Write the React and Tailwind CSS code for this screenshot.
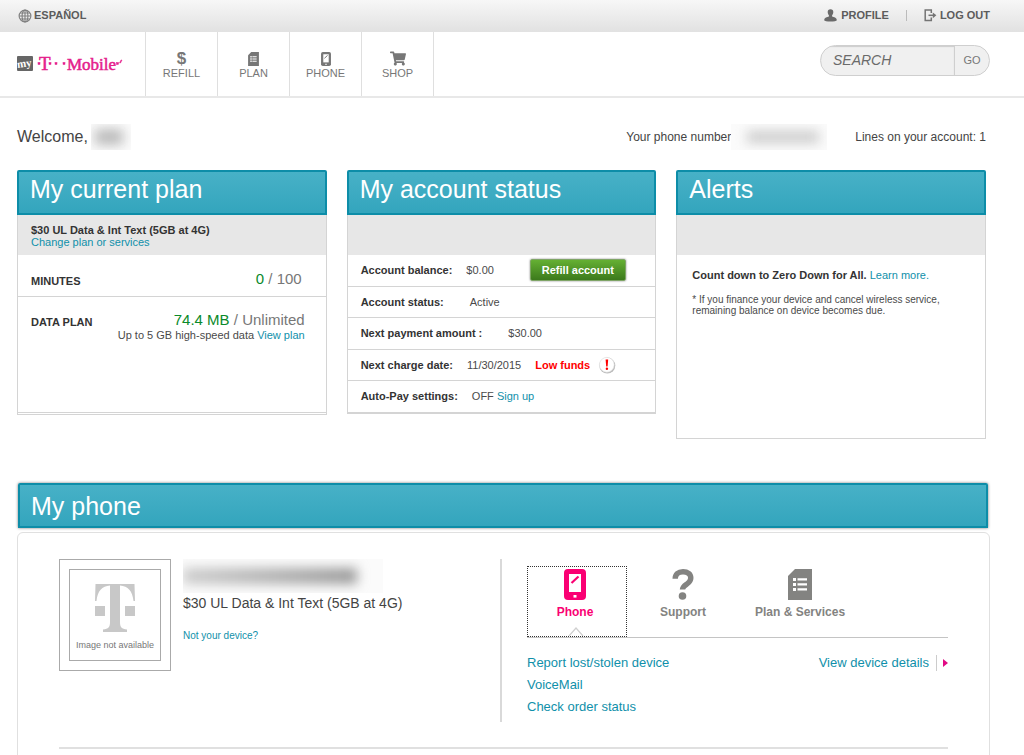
import { FaShoppingCart } from 'react-icons/fa';
import { clsx } from 'clsx';

const GlobeIcon = () => (
  <svg viewBox="0 0 14 14" className="w-[14px] h-[14px]" fill="none" stroke="#808080" strokeWidth="1.1">
    <circle cx="7" cy="7" r="5.9" />
    <ellipse cx="7" cy="7" rx="2.9" ry="5.9" />
    <path d="M7 1v12M1 7h12M2 4h10M2 10h10" />
  </svg>
);

const ProfileIcon = () => (
  <svg viewBox="0 0 13 13" className="w-[13px] h-[13px]" fill="#6a6a6a">
    <path d="M6.5 0.3c1.9 0 2.9 1.3 2.8 3-.1 1.4-.6 2.3-1.2 3v1.1c1.7.6 4.6 1.2 4.6 3.2v.9c0 .5-2.8 1-6.200 1s-6.200-.5-6.200-1v-.9c0-2 2.900-2.600 4.600-3.200V6.300c-.6-.7-1.100-1.600-1.200-3-.1-1.700.9-3 2.800-3z" />
  </svg>
);

const LogoutIcon = () => (
  <svg viewBox="0 0 13 13" className="w-[13px] h-[13px]" fill="none" stroke="#747474" strokeWidth="1.500">
    <path d="M7.300 4V1H1.200v10.500h6.100V8.600" />
    <path d="M4.500 6.300h5" />
    <path d="M8.800 3.400l3.600 2.900-3.600 2.900z" fill="#747474" stroke="none" />
  </svg>
);

const SimIcon = ({ className }) => (
  <svg viewBox="0 0 24 31" className={className}>
    <path d="M7 0h17v31H0V7z" fill="currentColor" />
    <g fill="#fff">
      <path d="M9.500 9.200h9.500v2.400H9.500zM9.500 14.200h9.500v2.400H9.500zM9.500 19.200h9.500v2.400H9.500z" />
      <path d="M5 9h3v3H5zM5 14h3v3H5zM5 19h3v3H5z" />
    </g>
  </svg>
);

const PhoneIcon = ({ className }) => (
  <svg viewBox="0 0 22 31" className={className}>
    <rect width="22" height="31" rx="4" fill="currentColor" />
    <rect x="5" y="5" width="12" height="18" fill="#fff" />
    <rect x="9.500" y="26" width="3" height="2.600" fill="#fff" />
    <path d="M7.500 14L14.500 7.500" stroke="currentColor" strokeWidth="2.200" />
  </svg>
);

const QuestionIcon = ({ className }) => (
  <svg viewBox="0 0 22 31" className={className}>
    <path
      d="M3.200 9.800C3.200 5.200 6.200 2.700 11 2.700s7.800 2.200 7.800 6.200c0 3.200-1.800 4.600-4 6.200-2.800 2-4.300 3-4.300 5.500"
      fill="none"
      stroke="currentColor"
      strokeWidth="5.400"
    />
    <circle cx="10.500" cy="27" r="3.800" fill="currentColor" />
  </svg>
);

const Logo = () => (
  <svg viewBox="0 0 108 20" className="w-[108px] h-5" role="img" aria-label="my T-Mobile">
    <rect x="0" y="2" width="16" height="15" rx="1" fill="#666" />
    <text x="0" y="13" fontSize="11" fontWeight="bold" fontFamily="Liberation Serif, serif" fill="#fff" transform="rotate(-8 8 10)">my</text>
    <g fill="#e5208c" stroke="#e5208c" strokeWidth="0.500" fontFamily="Liberation Serif, serif">
      <text x="22" y="16" fontSize="19">T</text>
      <rect x="21" y="8.500" width="2" height="2" />
      <rect x="32" y="8.500" width="2" height="2" />
      <rect x="38" y="8.500" width="2" height="2" />
      <rect x="46" y="8.500" width="2" height="2" />
      <text x="50" y="16" fontSize="17">Mobile</text>
      <rect x="99.500" y="8.500" width="2" height="2" />
      <path d="M102.500 9l1.500-3h1l-1.500 3z" />
    </g>
  </svg>
);

const MissingDeviceIcon = () => (
  <svg viewBox="0 0 40 48" className="w-10 h-12" fill="#c8c8c8">
    <path d="M0.500 0h39l.5 17h-1.500C37.500 7 33 2 25 1.500V38c0 5 1.500 7 7 7.500V48H8v-2.500c5.500-.5 7-2.500 7-7.500V1.500C7 2 2.500 7 1.500 17H0z" />
    <path d="M0 22h10v10H0zM30 22h10v10H30z" />
  </svg>
);

const WarningIcon = () => (
  <svg viewBox="0 0 18 18" className="w-[18px] h-[18px]">
    <circle cx="9.300" cy="9.600" r="8" fill="#bbb" />
    <circle cx="8.800" cy="8.800" r="7.400" fill="#fff" stroke="#ddd" strokeWidth="0.600" />
    <path d="M7.600 3.500h2.600l-.6 7H8.200z" fill="#f00" />
    <circle cx="8.900" cy="12.700" r="1.200" fill="#f00" />
  </svg>
);

const navItems = [
  { label: 'REFILL', icon: <span className="text-[17px] leading-4 font-bold">$</span> },
  { label: 'PLAN', icon: <SimIcon className="w-[11px] h-[14px]" /> },
  { label: 'PHONE', icon: <PhoneIcon className="w-[10px] h-[14px]" /> },
  { label: 'SHOP', icon: <FaShoppingCart className="w-4 h-[15px]" /> }
];

const tabs = [
  { label: 'Phone', icon: <PhoneIcon className="w-[22px] h-[31px]" />, active: true },
  { label: 'Support', icon: <QuestionIcon className="w-[22px] h-[31px]" />, padding: 'px-[33px]' },
  { label: 'Plan & Services', icon: <SimIcon className="w-6 h-[31px]" />, padding: 'px-4' }
];

const statusRows = [
  {
    label: 'Account balance:',
    gap: 'gap-[14px]',
    value: (
      <>
        $0.00
        <button className="ml-9 h-[22px] w-24 rounded-xs border border-[#7fa566] bg-linear-to-b from-[#65b033] to-[#3c7a1c] text-[11px] leading-4 font-bold text-white shadow-[0_0_2px_#777]">
          Refill account
        </button>
      </>
    )
  },
  { label: 'Account status:', gap: 'gap-[26px]', value: 'Active' },
  { label: 'Next payment amount :', gap: 'gap-[26px]', value: '$30.00' },
  {
    label: 'Next charge date:',
    gap: 'gap-[14px]',
    value: (
      <>
        11/30/2015
        <strong className="ml-[14px] mr-2 text-[#f00]">Low funds</strong>
        <WarningIcon />
      </>
    )
  },
  {
    label: 'Auto-Pay settings:',
    gap: 'gap-[14px]',
    value: (
      <>
        OFF&nbsp;<Link>Sign up</Link>
      </>
    )
  }
];

function Link({ children, className }) {
  return <a href="#" className={clsx('text-[#1090aa]', className)}>{children}</a>;
}

function Redacted({ className, barClassName }) {
  return (
    <span className={clsx('flex items-center overflow-hidden bg-[#fbfbfb]', className)} aria-hidden="true">
      <span className={clsx('block blur-[6px]', barClassName)} />
    </span>
  );
}

function Banner({ children, className }) {
  return (
    <h2 className={clsx('h-[45px] rounded-t-xs border-2 border-[#0d8da8] bg-linear-to-b from-[#47b1c7] to-[#33a5bd] px-[11px] text-[25px] text-white', className)}>
      {children}
    </h2>
  );
}

function Card({ title, strip, children, className }) {
  return (
    <section>
      <Banner className="leading-[34px]">{title}</Banner>
      <div className={clsx('border border-t-0 border-[#d4d4d4]', className)}>
        <div className="h-10 bg-[#e7e7e7] px-[13px] pt-[9px] leading-3">{strip}</div>
        {children}
      </div>
    </section>
  );
}

export default function App() {
  return (
    <div className="h-screen overflow-hidden bg-white font-['Liberation_Sans',Arial,sans-serif] text-[11px] text-[#4a4a4a]">
      <div className="flex h-8 items-center justify-between border-b border-[#e2e2e2] bg-linear-to-b from-[#f7f7f7] to-[#e2e2e2] pl-[18px] pr-[34px] font-bold text-[#5c5c5c]">
        <a href="#" className="flex items-center gap-0.5">
          <GlobeIcon />
          ESPAÑOL
        </a>
        <div className="flex items-center">
          <a href="#" className="flex items-center gap-1">
            <ProfileIcon />
            PROFILE
          </a>
          <span className="mx-[17px] h-[11px] w-px bg-[#bbb]" />
          <a href="#" className="flex items-center gap-[3px]">
            <LogoutIcon />
            LOG OUT
          </a>
        </div>
      </div>

      <header className="flex h-[66px] justify-between border-b-2 border-[#e8e8e8] pr-[34px]">
        <div className="flex">
          <a href="#" className="flex w-[145px] items-center pl-[17px]">
            <Logo />
          </a>
          <nav className="flex border-r border-[#dfdfdf]">
            {navItems.map((item) => (
              <a key={item.label} href="#" className="flex w-[72px] flex-col items-center border-l border-[#dfdfdf] pt-[19px] text-[#777]">
                <span className="flex h-[15px] items-center">{item.icon}</span>
                <span className="leading-[14px]">{item.label}</span>
              </a>
            ))}
          </nav>
        </div>
        <form className="mt-[13px] flex h-[31px] w-[170px] overflow-hidden rounded-full border border-[#cfcfcf] bg-[#f0f0f0]">
          <input
            type="text"
            aria-label="Search"
            placeholder="SEARCH"
            className="w-[134px] border-r border-[#cfcfcf] pl-3 text-[14px] italic placeholder:text-[#6a6a6a] shadow-[inset_0_1px_1px_#ccc]"
          />
          <button type="button" className="flex-1 text-[#777]">GO</button>
        </form>
      </header>

      <main className="pl-[17px] pr-[34px]">
        <div className="mr-1 flex h-[72px] items-center justify-between pt-1.5 text-[12px] text-[#444]">
          <div className="flex items-center gap-[3px]">
            <h1 className="text-[16px]">Welcome,</h1>
            <Redacted className="h-[26px] w-10" barClassName="ml-1 h-4 w-7 bg-[#bbb]" />
          </div>
          <div className="flex items-center">
            <span>Your phone number</span>
            <Redacted className="h-[26px] w-24" barClassName="ml-4 h-3 w-[72px] bg-[#ccc]" />
            <span className="ml-7">Lines on your account: 1</span>
          </div>
        </div>

        <div className="mr-1 grid grid-cols-3 items-start gap-5">
          <Card
            title="My current plan"
            className="h-[200px] border-b-3 border-double"
            strip={
              <>
                <p className="font-bold text-[#333]">$30 UL Data &amp; Int Text (5GB at 4G)</p>
                <Link>Change plan or services</Link>
              </>
            }
          >
            <div className="flex h-[42px] justify-between border-b border-[#d4d4d4] pl-[13px] pr-6 pt-4">
              <h3 className="pt-0.5 font-bold text-[#333]">MINUTES</h3>
              <p className="text-[15px] leading-4 text-[#777]">
                <span className="text-[#0a8a2a]">0</span> / 100
              </p>
            </div>
            <div className="flex justify-between pl-[13px] pr-[21px] pt-[15px]">
              <h3 className="pt-0.5 font-bold text-[#333]">DATA PLAN</h3>
              <div className="text-right">
                <p className="text-[15px] leading-4 text-[#777]">
                  <span className="text-[#0a8a2a]">74.4 MB</span> / Unlimited
                </p>
                <p className="leading-[14px]">
                  Up to 5 GB high-speed data <Link>View plan</Link>
                </p>
              </div>
            </div>
          </Card>

          <Card title="My account status">
            <dl className="flex h-[158px] flex-col">
              {statusRows.map((row) => (
                <div key={row.label} className={clsx('flex flex-1 items-center border-b border-[#d4d4d4] px-[13px]', row.gap)}>
                  <dt className="font-bold text-[#333]">{row.label}</dt>
                  <dd className="flex items-center">{row.value}</dd>
                </div>
              ))}
            </dl>
          </Card>

          <Card title="Alerts" className="h-[224px]">
            <div className="px-[15px] pt-[13px]">
              <p className="leading-[14px]">
                <strong className="text-[#333]">Count down to Zero Down for All.</strong> <Link>Learn more.</Link>
              </p>
              <p className="mt-3 pr-4 text-[10px] leading-[11px]">
                * If you finance your device and cancel wireless service, remaining balance on device becomes due.
              </p>
            </div>
          </Card>
        </div>

        <section className="mt-11">
          <Banner className="ml-px mr-0.5 leading-[42px] shadow-[0_0_3px_#777]">My phone</Banner>
          <div className="mt-1 rounded-t-md border border-[#e0e0e0] px-[41px] pt-[26px]">
            <div className="flex border-b-2 border-[#e0e0e0] pb-[25px]">
              <div className="flex min-w-0 flex-1 gap-3">
                <div className="h-28 w-28 shrink-0 border border-[#aaa] p-[9px]">
                  <div className="flex h-full flex-col items-center border border-[#aaa] pt-[14px]">
                    <MissingDeviceIcon />
                    <p className="mt-2 whitespace-nowrap text-[9px] leading-[10px] text-[#777]">Image not available</p>
                  </div>
                </div>
                <div>
                  <Redacted className="h-[34px] w-[200px]" barClassName="h-4 w-[174px] bg-linear-to-r from-[#ccc] to-[#999]" />
                  <p className="text-[14px] leading-5 text-[#444]">$30 UL Data &amp; Int Text (5GB at 4G)</p>
                  <Link className="mt-[17px] block text-[10px] leading-3">Not your device?</Link>
                </div>
              </div>

              <div className="h-[163px] w-[448px] border-l-2 border-[#d9d9d9] pl-[25px] pt-[7px]">
                <div className="flex border-b border-[#c4c4c4] text-[12px] font-bold">
                  {tabs.map((tab) => (
                    <button
                      key={tab.label}
                      className={clsx(
                        'relative flex h-[71px] flex-col items-center',
                        tab.active ? 'w-[100px] border border-dotted border-[#333] pr-1 pt-0.5 text-[#fa0073]' : 'pt-[3px] text-[#838381]',
                        tab.padding
                      )}
                    >
                      {tab.icon}
                      <span className="mt-[3px]">{tab.label}</span>
                      {tab.active && (
                        <svg viewBox="0 0 16 9" className="absolute bottom-0 left-10 h-[9px] w-4" fill="none" stroke="#d0d0d0" strokeWidth="1.300">
                          <path d="M1 9l7-8 7 8" />
                        </svg>
                      )}
                    </button>
                  ))}
                </div>
                <div className="flex items-start justify-between pt-[14px] text-[13px] leading-[22px]">
                  <ul>
                    <li><Link>Report lost/stolen device</Link></li>
                    <li><Link>VoiceMail</Link></li>
                    <li><Link>Check order status</Link></li>
                  </ul>
                  <div className="flex items-center">
                    <Link>View device details</Link>
                    <span className="ml-[7px] mr-1.5 h-4 w-px bg-[#ccc]" />
                    <svg viewBox="0 0 5 8" className="h-2 w-[5px]" fill="#e20a84">
                      <path d="M0 0l5 4-5 4z" />
                    </svg>
                  </div>
                </div>
              </div>
            </div>
            <div className="h-10" />
          </div>
        </section>
      </main>
    </div>
  );
}
